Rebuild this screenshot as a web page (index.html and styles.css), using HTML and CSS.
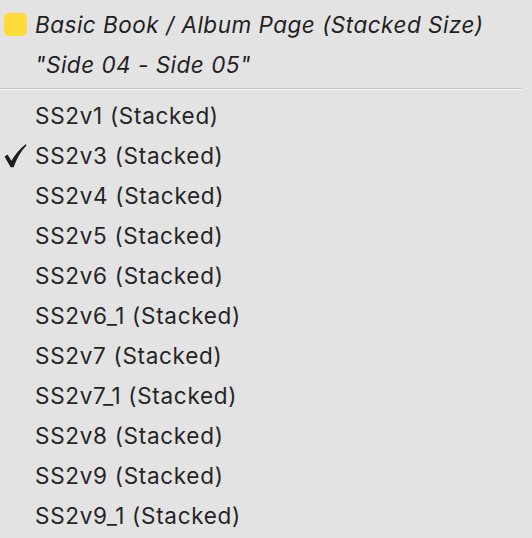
FILE: index.html
```html
<!DOCTYPE html>
<html>
<head>
<meta charset="utf-8">
<link rel="stylesheet" href="styles.css">
</head>
<body>
<div class="menu">
  <div class="header">
    <div class="hrow"><span class="swatch"></span><span class="htext">Basic Book / Album Page (Stacked Size)</span></div>
    <div class="hrow"><span class="slot"></span><span class="htext">"Side 04 - Side 05"</span></div>
  </div>
  <div class="sep"></div>
  <ul class="items">
    <li class="item"><span class="slot"></span>SS2v1 (Stacked)</li>
    <li class="item"><span class="slot"><svg class="check" width="23" height="24" viewBox="0 0 23 24"><path d="M0.5 12.5 L3.6 10.6 L7.4 16.8 Q13 7 21.6 0.2 L22.6 1.3 Q14.6 9.5 9.6 23.2 L6.6 23.2 Z" fill="#1e1e1e"/></svg></span>SS2v3 (Stacked)</li>
    <li class="item"><span class="slot"></span>SS2v4 (Stacked)</li>
    <li class="item"><span class="slot"></span>SS2v5 (Stacked)</li>
    <li class="item"><span class="slot"></span>SS2v6 (Stacked)</li>
    <li class="item"><span class="slot"></span>SS2v6_1 (Stacked)</li>
    <li class="item"><span class="slot"></span>SS2v7 (Stacked)</li>
    <li class="item"><span class="slot"></span>SS2v7_1 (Stacked)</li>
    <li class="item"><span class="slot"></span>SS2v8 (Stacked)</li>
    <li class="item"><span class="slot"></span>SS2v9 (Stacked)</li>
    <li class="item"><span class="slot"></span>SS2v9_1 (Stacked)</li>
  </ul>
</div>
</body>
</html>
```
FILE: styles.css
```css
html, body {
  margin: 0;
  padding: 0;
  background: #e3e3e3;
  overflow: hidden;
}
.menu {
  position: relative;
  width: 532px;
  height: 538px;
  font-family: Inter, "Noto Sans", sans-serif;
  color: #252525;
  font-size: 22.5px;
  letter-spacing: 0.7px;
}
.menu::after {
  content: "";
  position: absolute;
  top: -14px;
  right: 4px;
  width: 14px;
  height: 14px;
  border-right: 1.5px solid #9a9a9a;
  border-bottom: 1.5px solid transparent;
  border-radius: 0 10px 10px 0;
}
.header {
  padding-top: 4px;
}
.hrow {
  display: flex;
  align-items: center;
  height: 40px;
}
.htext {
  font-style: italic;
  letter-spacing: 0.5px;
  color: #1f1f1f;
}
.slot {
  width: 35px;
  flex: none;
  display: flex;
  align-items: center;
}
.swatch {
  width: 23px;
  height: 23px;
  margin: 0 8px 0 4px;
  border-radius: 5px;
  background: #fedb38;
  flex: none;
}
.sep {
  margin-top: 4px;
  width: 522px;
  height: 1px;
  background: #c6c6c6;
  border-bottom: 1px solid #f3f3f3;
}
.items {
  list-style: none;
  margin: 0;
  padding: 5px 0 0;
}
.item {
  display: flex;
  align-items: center;
  height: 40px;
}
.check {
  margin-left: 4px;
  margin-top: 2px;
}
```
